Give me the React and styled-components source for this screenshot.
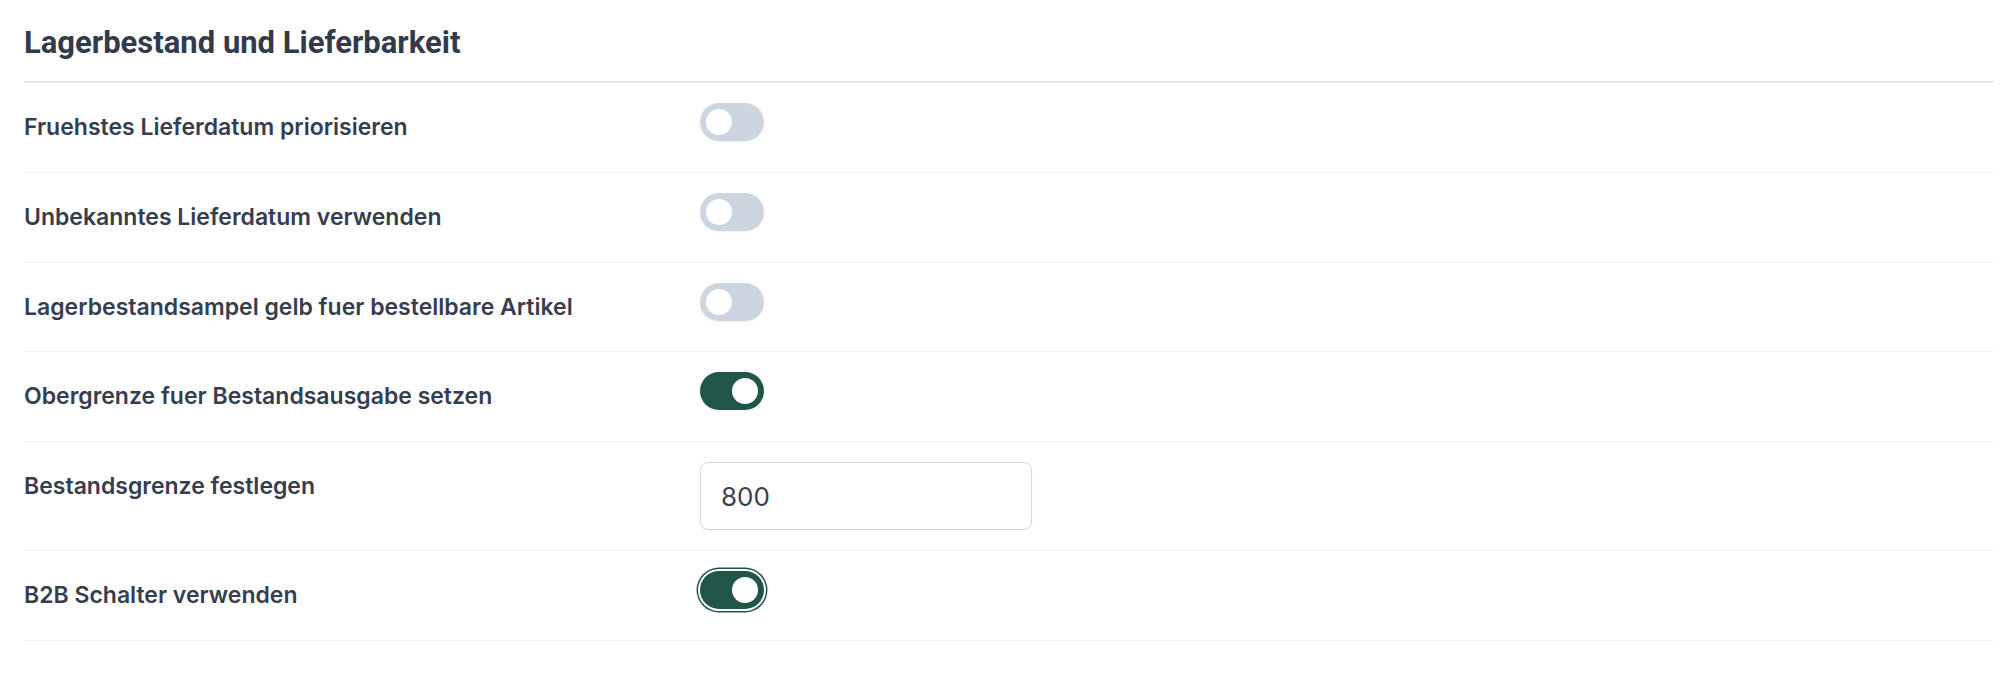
import React, { useState } from "react";
import styled, { createGlobalStyle } from "styled-components";

const GlobalStyle = createGlobalStyle`
  body {
    margin: 0;
    background: #ffffff;
    font-family: Inter, "Noto Sans", sans-serif;
  }
`;

const Section = styled.section`
  padding: 0 14px 0 24px;
`;

const Heading = styled.h2`
  margin: 0;
  padding: 20px 0 15px;
  line-height: 46px;
  font-family: Roboto, "Open Sans", sans-serif;
  font-stretch: 88%;
  font-weight: 700;
  font-size: 31px;
  color: #323a4b;
  border-bottom: 2px solid #e8e9ec;
`;

const Row = styled.div`
  display: grid;
  grid-template-columns: 676px 1fr;
  align-items: start;
  padding: 20px 0 19.75px;
  border-bottom: 1px solid #f1f2f4;
`;

const Label = styled.label`
  display: block;
  margin: 8px 0;
  line-height: 33px;
  font-size: 23px;
  font-weight: 600;
  color: #363d4f;
`;

const Track = styled.button`
  position: relative;
  width: 64px;
  height: 38px;
  padding: 0;
  border: none;
  border-radius: 19px;
  cursor: pointer;
  background: ${(p) => (p.$on ? "#21554a" : "#cdd5e0")};
  box-shadow: ${(p) =>
    p.$focused
      ? "0 0 0 2px #ffffff, 0 0 0 3.5px #21554a"
      : "0 1px 2px rgba(15, 23, 42, 0.06)"};
`;

const Knob = styled.span`
  position: absolute;
  top: 6px;
  left: ${(p) => (p.$on ? "32px" : "6px")};
  width: 26px;
  height: 26px;
  border-radius: 50%;
  background: #ffffff;
`;

const NumberInput = styled.input`
  box-sizing: border-box;
  width: 332px;
  height: 68px;
  padding: 0 20px;
  border: 1px solid #d6d6e0;
  border-radius: 8px;
  font-family: Inter, sans-serif;
  font-size: 26px;
  color: #3a3f55;
  box-shadow: 0 1px 2px rgba(15, 23, 42, 0.04);
  outline: none;
`;

const Toggle = ({ initial, focused }) => {
  const [on, setOn] = useState(initial);
  return (
    <Track $on={on} $focused={focused} onClick={() => setOn(!on)}>
      <Knob $on={on} />
    </Track>
  );
};

const settings = [
  { label: "Fruehstes Lieferdatum priorisieren", type: "toggle", value: false },
  { label: "Unbekanntes Lieferdatum verwenden", type: "toggle", value: false },
  { label: "Lagerbestandsampel gelb fuer bestellbare Artikel", type: "toggle", value: false },
  { label: "Obergrenze fuer Bestandsausgabe setzen", type: "toggle", value: true },
  { label: "Bestandsgrenze festlegen", type: "number", value: "800" },
  { label: "B2B Schalter verwenden", type: "toggle", value: true, focused: true },
];

export default function App() {
  return (
    <>
      <GlobalStyle />
      <Section>
        <Heading>Lagerbestand und Lieferbarkeit</Heading>
        {settings.map((s) => (
          <Row key={s.label}>
            <Label>{s.label}</Label>
            <div>
              {s.type === "toggle" ? (
                <Toggle initial={s.value} focused={s.focused} />
              ) : (
                <NumberInput type="text" defaultValue={s.value} />
              )}
            </div>
          </Row>
        ))}
      </Section>
    </>
  );
}
